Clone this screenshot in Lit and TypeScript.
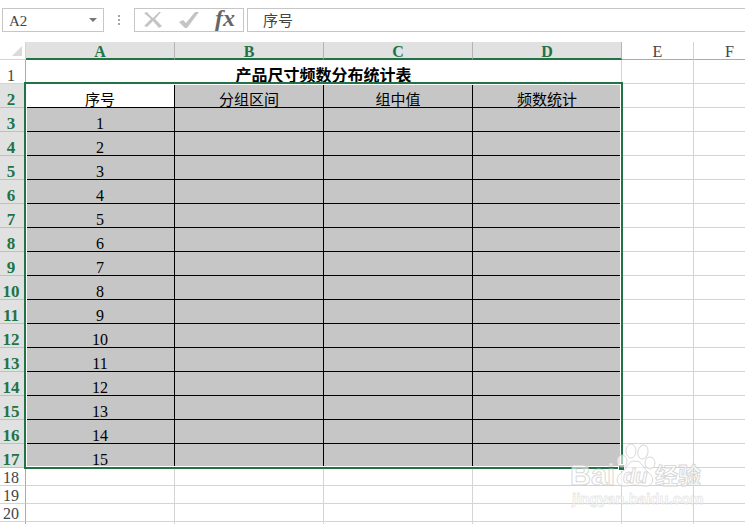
import { LitElement, html, css } from "lit";
import { customElement, property, state } from "lit/decorators.js";
import { classMap } from "lit/directives/class-map.js";

const GREEN = css`#217346`;
const FACE = css`"Liberation Serif", "Noto Sans CJK SC", sans-serif`;

@customElement("formula-bar")
class FormulaBar extends LitElement {
  @property() cell = "";
  @property() content = "";

  static styles = css`
    :host {
      display: flex;
      align-items: stretch;
      height: 24px;
      padding: 8px 0 10px 2px;
      font-family: ${FACE};
    }
    .box {
      display: flex;
      box-sizing: border-box;
      border: 1px solid #c6c6c6;
      background: #fff;
    }
    .name {
      width: 102px;
    }
    input {
      box-sizing: border-box;
      min-width: 0;
      flex: 1;
      border: 0;
      outline: 0;
      padding: 2px 0 0 6px;
      background: none;
      color: #444;
      font: 15px ${FACE};
    }
    button {
      display: flex;
      align-items: center;
      justify-content: center;
      border: 0;
      padding: 0;
      background: none;
    }
    .drop {
      width: 20px;
    }
    .grip {
      width: 30px;
      display: flex;
      align-items: center;
      justify-content: center;
    }
    .actions {
      width: 110px;
      margin-right: 3px;
      justify-content: space-between;
    }
    .actions button {
      width: 36px;
    }
    .actions .fx {
      padding-bottom: 4px;
      color: #666;
      font: italic 700 24px/20px ${FACE};
    }
    .content {
      flex: 1;
      margin-right: -1px;
    }
    .content input {
      padding: 0 0 2px 15px;
    }
  `;

  render() {
    return html`
      <div class="box name">
        <input aria-label="Name box" .value=${this.cell} />
        <button class="drop" aria-label="Show names">
          <svg width="8" height="4"><path d="M0 0H8L4 4Z" fill="#777" /></svg>
        </button>
      </div>
      <div class="grip">
        <svg width="2" height="10" fill="#a6a6a6">
          <rect width="2" height="2" />
          <rect y="4" width="2" height="2" />
          <rect y="8" width="2" height="2" />
        </svg>
      </div>
      <div class="box actions">
        <button aria-label="Cancel">
          <svg width="18" height="16" viewBox="0 0 18 16" fill="#c4c4c4">
            <path d="M0 1L3 0Q6 4 9 6L15 0H17L11 7L18 14L15 16L9 9L3 15L0 14L7 7Z" />
          </svg>
        </button>
        <button aria-label="Enter">
          <svg width="20" height="16" viewBox="0 0 20 16" fill="#c4c4c4">
            <path d="M0 10L4 8L7 11L16 0H20L8 16H6Z" />
          </svg>
        </button>
        <button class="fx" aria-label="Insert function">fx</button>
      </div>
      <div class="box content">
        <input aria-label="Formula" .value=${this.content} />
      </div>
    `;
  }
}

@customElement("sheet-grid")
class SheetGrid extends LitElement {
  @state() columns = ["A", "B", "C", "D", "E", "F"];
  @state() headings = ["序号", "分组区间", "组中值", "频数统计"];

  static styles = css`
    :host {
      display: block;
      position: relative;
      font-family: ${FACE};
      color: #000;
    }
    table {
      table-layout: fixed;
      width: 766px;
      border-collapse: separate;
      border-spacing: 0;
    }
    .index {
      width: 26px;
    }
    .wide {
      width: 149px;
    }
    .narrow {
      width: 72px;
    }
    th,
    td {
      box-sizing: border-box;
      padding: 0;
      height: 24px;
      border: 0 solid #d4d4d4;
      border-width: 0 1px 1px 0;
      text-align: center;
      vertical-align: bottom;
      font-size: 16px;
      line-height: 14px;
      font-weight: 400;
      white-space: nowrap;
    }
    th {
      color: #444;
    }
    thead th {
      height: 18px;
      border-bottom-color: #ababab;
    }
    tbody th {
      padding-right: 3px;
      border-right-color: #ababab;
    }
    .on {
      background: #e1e1e1;
      color: ${GREEN};
      font-weight: 700;
    }
    thead .on {
      border-bottom: 2px solid ${GREEN};
      border-right-color: #b4b4b4;
      line-height: 12px;
    }
    tbody .on {
      border-bottom-color: #c0c0c0;
      font-size: 17px;
    }
    .corner {
      border-bottom-color: #d4d4d4;
      padding-right: 3px;
    }
    .corner svg {
      display: block;
      margin: 0 0 3px auto;
    }
    .title {
      font-weight: 700;
    }
    .picked {
      background: #c6c6c6;
      border-color: #000;
    }
    .text {
      font-size: 15px;
    }
    .active {
      background: #fff;
    }
    .short th,
    .short td {
      height: 18px;
    }
    .range {
      position: absolute;
      box-sizing: border-box;
      left: 24px;
      top: 40px;
      width: 599px;
      height: 387px;
      border: 2px solid ${GREEN};
      box-shadow: inset 0 0 0 1px #fff;
      pointer-events: none;
    }
    .handle {
      position: absolute;
      right: -4px;
      bottom: -4px;
      width: 5px;
      height: 5px;
      background: ${GREEN};
      border: 1px solid #fff;
    }
  `;

  private rowHead(n: number, on: boolean) {
    return html`<th scope="row" class=${classMap({ on })}>${n}</th>`;
  }

  render() {
    const numbers = Array.from({ length: 15 }, (_, i) => i + 1);
    return html`
      <table>
        <colgroup>
          <col class="index" />
          ${this.columns.map((_, i) => html`<col class=${i < 4 ? "wide" : "narrow"} />`)}
        </colgroup>
        <thead>
          <tr>
            <th class="corner">
              <svg width="10" height="10"><path d="M10 0V10H0Z" fill="#dadada" /></svg>
            </th>
            ${this.columns.map(
              (c, i) => html`<th scope="col" class=${classMap({ on: i < 4 })}>${c}</th>`
            )}
          </tr>
        </thead>
        <tbody>
          <tr>
            ${this.rowHead(1, false)}
            <td class="title" colspan="4">产品尺寸频数分布统计表</td>
            <td></td>
            <td></td>
          </tr>
          <tr>
            ${this.rowHead(2, true)}
            ${this.headings.map(
              (h, i) => html`<td class=${classMap({ picked: true, text: true, active: i === 0 })}>${h}</td>`
            )}
            <td></td>
            <td></td>
          </tr>
          ${numbers.map(
            (n) => html`<tr>
              ${this.rowHead(n + 2, true)}
              <td class="picked">${n}</td>
              <td class="picked"></td>
              <td class="picked"></td>
              <td class="picked"></td>
              <td></td>
              <td></td>
            </tr>`
          )}
          ${[18, 19, 20].map(
            (n) => html`<tr class="short">
              ${this.rowHead(n, false)}
              ${this.columns.map(() => html`<td></td>`)}
            </tr>`
          )}
          <tr class="short">
            <th></th>
            ${this.columns.map(() => html`<td></td>`)}
          </tr>
        </tbody>
      </table>
      <div class="range"><div class="handle"></div></div>
    `;
  }
}

@customElement("site-mark")
class SiteMark extends LitElement {
  static styles = css`
    :host {
      display: block;
      pointer-events: none;
    }
    svg {
      display: block;
      overflow: visible;
      fill: #fff;
      fill-opacity: 0.6;
      stroke: #c8c8c8;
      stroke-opacity: 0.7;
      stroke-width: 1px;
    }
    text {
      font-family: "Liberation Sans", "Noto Sans CJK SC", sans-serif;
      font-weight: 700;
    }
    .brand {
      font-size: 29px;
    }
    .inner {
      font-size: 20px;
      font-style: italic;
    }
    .name {
      font-size: 23px;
    }
    .url {
      font-size: 15px;
      stroke-opacity: 0.4;
    }
  `;

  render() {
    return html`
      <svg width="136" height="66" viewBox="0 0 136 66">
        <text class="brand" x="0" y="41">Bai</text>
        <ellipse cx="52" cy="17" rx="5" ry="6" />
        <ellipse cx="61" cy="7" rx="5" ry="7" />
        <ellipse cx="73" cy="8" rx="5" ry="7" transform="rotate(12 73 8)" />
        <ellipse cx="80" cy="19" rx="5" ry="6" />
        <path
          d="M65 17C73 17 73 25 79 29C86 35 82 43 75 42Q65 40 56 42C47 43 44 35 51 29C58 24 57 17 65 17Z"
        />
        <text class="inner" x="53" y="39">du</text>
        <text class="name" x="85" y="40">经验</text>
        <text class="url" x="2" y="60">jingyan.baidu.com</text>
      </svg>
    `;
  }
}

@customElement("app-root")
class AppRoot extends LitElement {
  static styles = css`
    :host {
      display: block;
      position: relative;
      height: 100vh;
      overflow: hidden;
      background: #fff;
    }
    site-mark {
      position: absolute;
      right: 39px;
      bottom: 14px;
    }
  `;

  render() {
    return html`
      <formula-bar cell="A2" content="序号"></formula-bar>
      <sheet-grid></sheet-grid>
      <site-mark></site-mark>
    `;
  }
}
